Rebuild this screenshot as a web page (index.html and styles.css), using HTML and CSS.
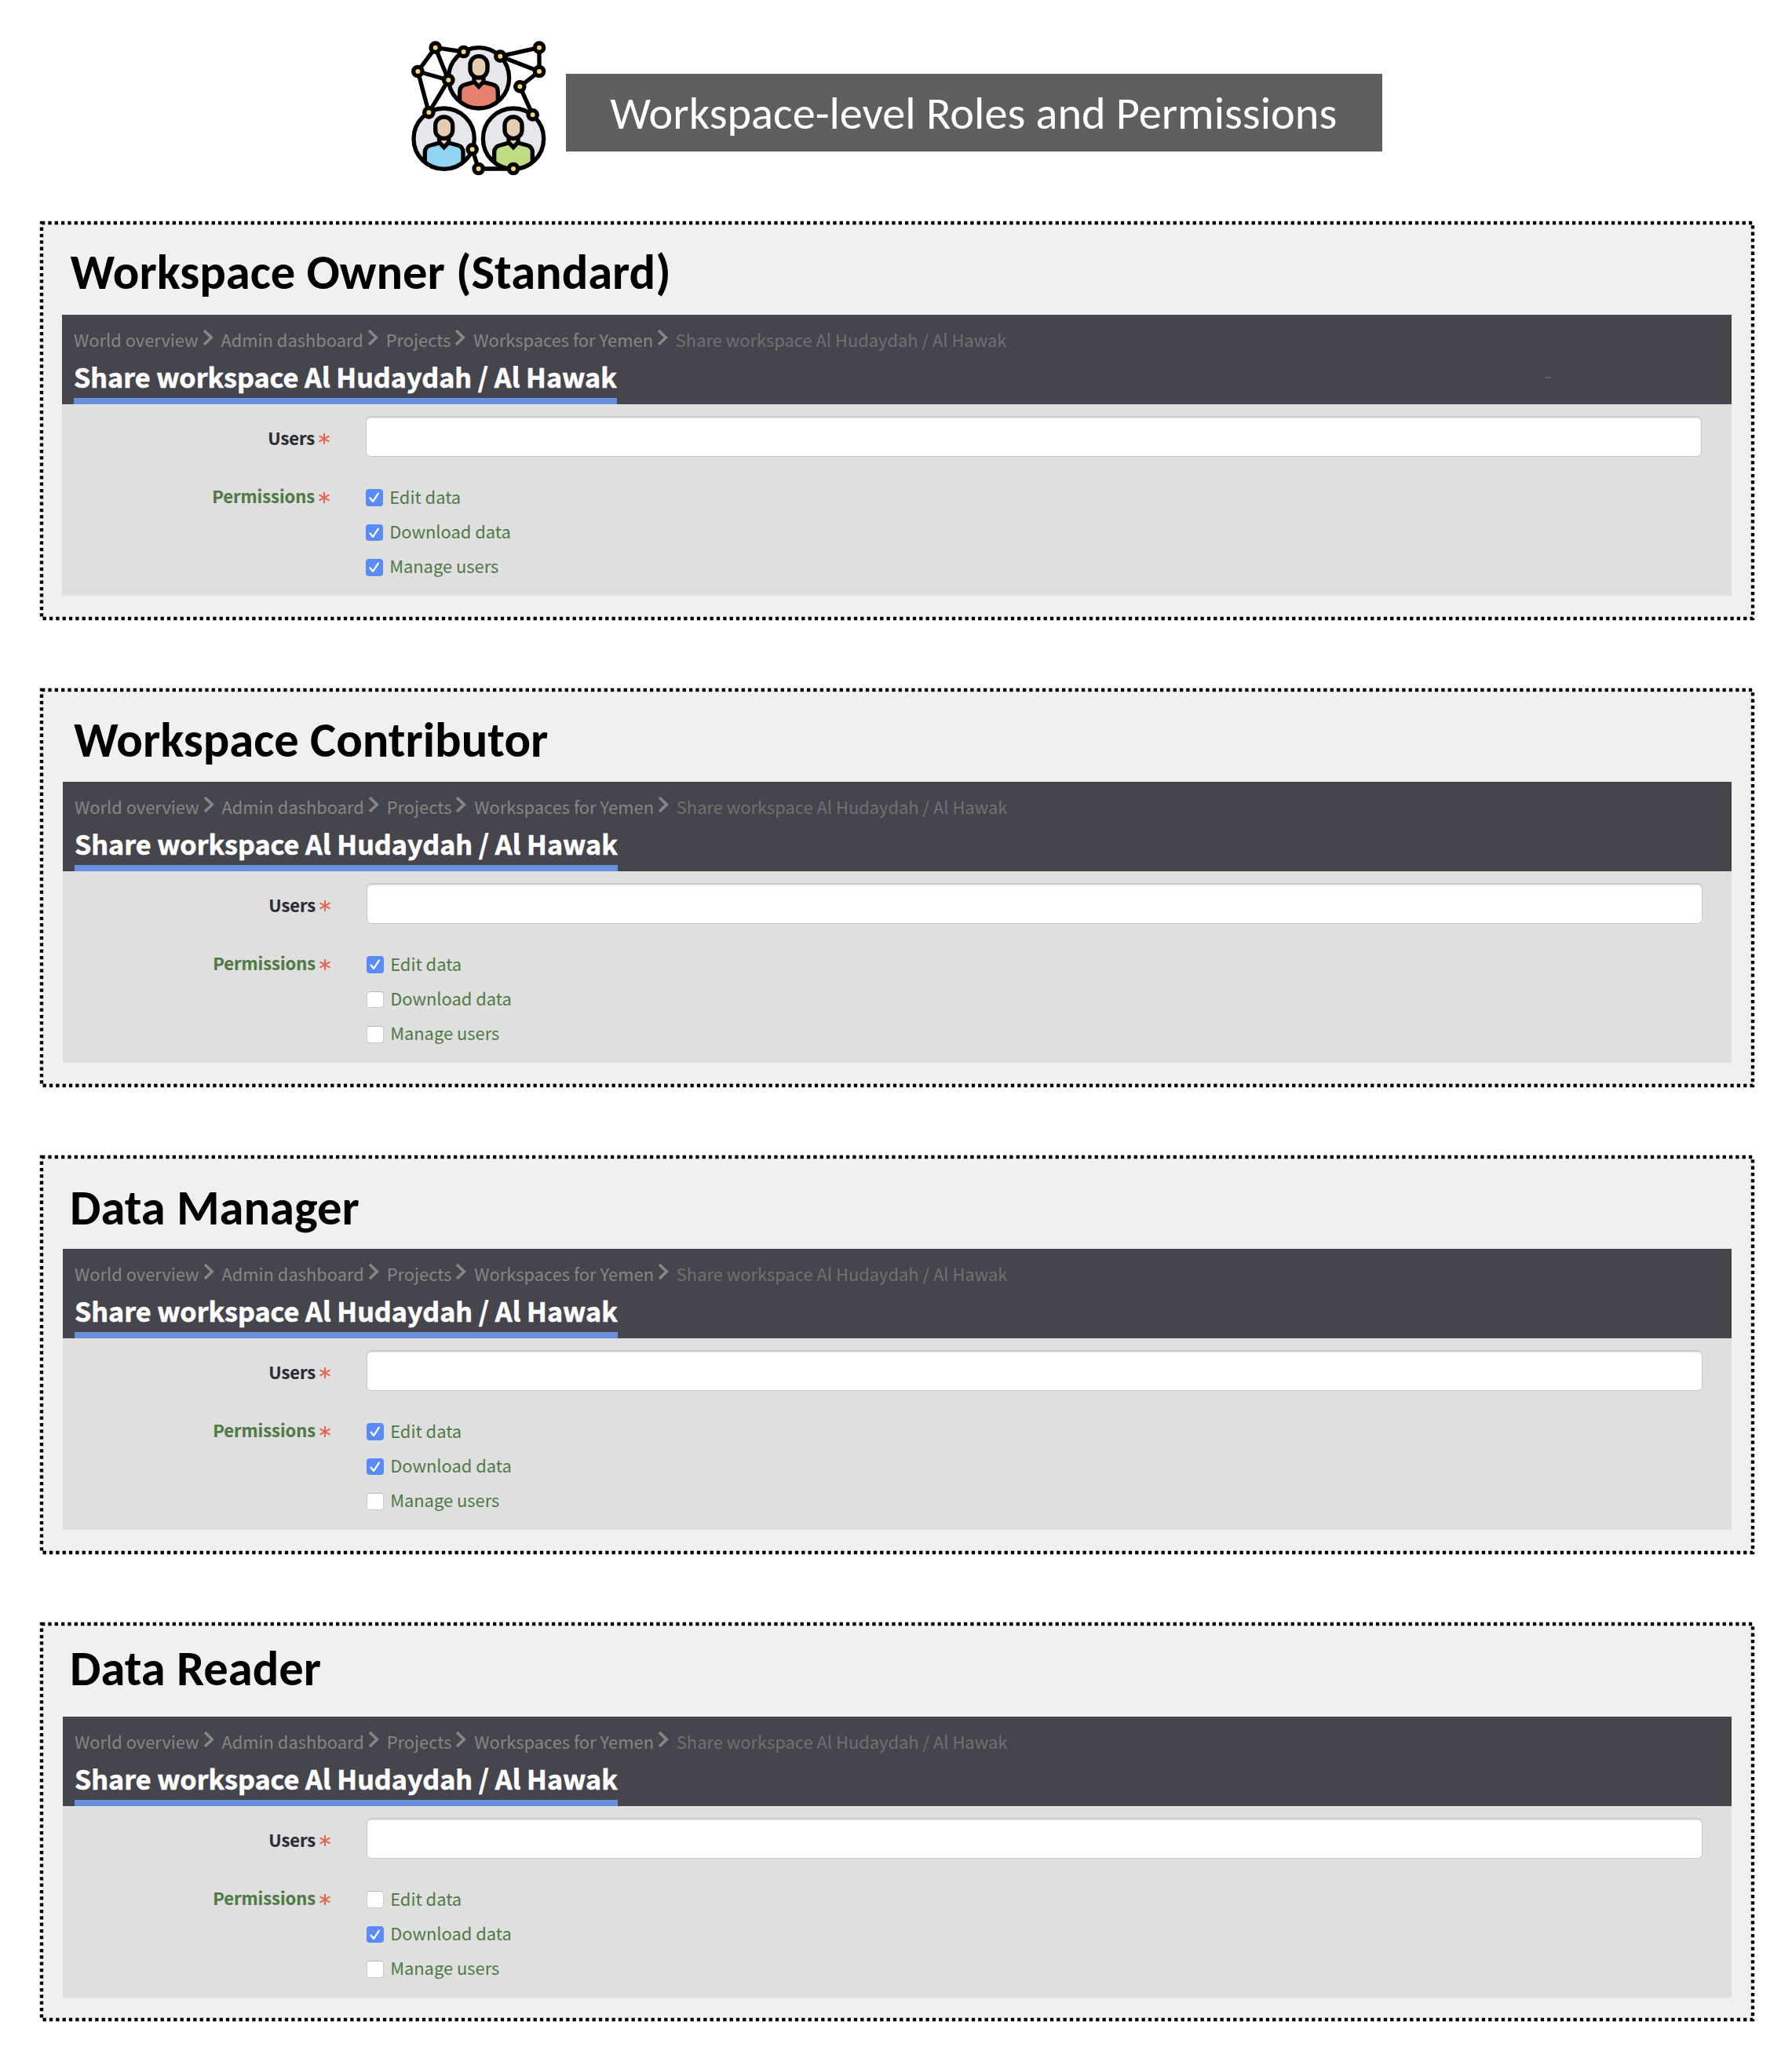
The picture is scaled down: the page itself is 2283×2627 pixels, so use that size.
FILE: index.html
```html
<!DOCTYPE html>
<html lang="en">
<head>
<meta charset="utf-8">
<title>Workspace-level Roles and Permissions</title>
<link rel="stylesheet" href="styles.css">
</head>
<body>
<svg class="defs" width="0" height="0" aria-hidden="true">
  <symbol id="chevron" viewBox="0 0 14 22"><path d="M2 2 L11.3 11 L2 20" fill="none" stroke="#868686" stroke-width="3.6"/></symbol>
  <symbol id="star" viewBox="0 0 16 16"><path d="M8 1V15M1.5 4.4L14.5 11.6M14.5 4.4L1.5 11.6" fill="none" stroke="#e2684f" stroke-width="2.1"/></symbol>
  <symbol id="tick" viewBox="0 0 22 22"><path d="M5.6 11.8L9.3 16.2L16.2 5.8" fill="none" stroke="#fff" stroke-width="2.3" stroke-linecap="round" stroke-linejoin="round"/></symbol>
  <symbol id="person" viewBox="0 0 260 260" overflow="visible">
    <circle cx="130" cy="130" r="117" fill="#e6e7ec"/>
    <path d="M57 222V182Q57 160 80 155L112 144L130 166L148 144L182 155Q203 160 203 182V222Q130 276 57 222Z" fill="currentColor"/>
    <path d="M114 128H146V146L130 162L114 146Z" fill="#e6cdb1"/>
    <path d="M57 222V182Q57 160 80 155L112 146V128M148 128V146L182 155Q203 160 203 182V222M112 144L130 163L148 144" fill="none" stroke="#000" stroke-width="16"/>
    <rect x="97" y="47" width="66" height="82" rx="32" fill="#e6cdb1" stroke="#000" stroke-width="16"/>
    <circle cx="130" cy="130" r="116" fill="none" stroke="#000" stroke-width="16"/>
  </symbol>
</svg>

<header class="top">
  <svg class="logo" viewBox="0 0 600 570">
    <use class="red" href="#person" x="170" y="48" width="260" height="260"/>
    <use class="blue" href="#person" x="37" y="280" width="260" height="260"/>
    <use class="green" href="#person" x="302" y="280" width="260" height="260"/>
    <path d="M242 78L134 62L67 153L184 186L134 62M67 153L109 310L184 186M531 153L382 95L531 62V153L457 211L506 319M275 451L299 525H432" fill="none" stroke="#000" stroke-width="16" stroke-linejoin="round"/>
    <g fill="#f6d773" stroke="#000" stroke-width="16">
      <circle cx="134" cy="62" r="17"/><circle cx="242" cy="78" r="17"/><circle cx="67" cy="153" r="17"/><circle cx="184" cy="186" r="17"/><circle cx="109" cy="310" r="17"/><circle cx="382" cy="95" r="17"/><circle cx="531" cy="62" r="17"/><circle cx="531" cy="153" r="17"/><circle cx="457" cy="211" r="17"/><circle cx="506" cy="319" r="17"/><circle cx="275" cy="451" r="17"/><circle cx="299" cy="525" r="17"/><circle cx="432" cy="525" r="17"/>
    </g>
  </svg>
  <h1 class="banner">Workspace-level Roles and Permissions</h1>
</header>

<main>
<section class="panel owner">
  <svg class="frame"><rect width="2180" height="504"/></svg>
  <h2>Workspace Owner (Standard)</h2>
  <div class="bar">
    <nav><span>World overview</span><svg><use href="#chevron"/></svg><span>Admin dashboard</span><svg><use href="#chevron"/></svg><span>Projects</span><svg><use href="#chevron"/></svg><span>Workspaces for Yemen</span><svg><use href="#chevron"/></svg><span class="here">Share workspace Al Hudaydah / Al Hawak</span></nav>
    <h3>Share workspace Al Hudaydah / Al Hawak</h3>
    <i class="mark"></i>
  </div>
  <div class="form">
    <div class="label">Users<svg><use href="#star"/></svg></div><div class="input"></div>
    <div class="label perm">Permissions<svg><use href="#star"/></svg></div>
    <div class="options">
      <div class="option"><span class="box on"><svg><use href="#tick"/></svg></span>Edit data</div>
      <div class="option"><span class="box on"><svg><use href="#tick"/></svg></span>Download data</div>
      <div class="option"><span class="box on"><svg><use href="#tick"/></svg></span>Manage users</div>
    </div>
  </div>
</section>

<section class="panel contributor">
  <svg class="frame"><rect width="2180" height="504"/></svg>
  <h2>Workspace Contributor</h2>
  <div class="bar">
    <nav><span>World overview</span><svg><use href="#chevron"/></svg><span>Admin dashboard</span><svg><use href="#chevron"/></svg><span>Projects</span><svg><use href="#chevron"/></svg><span>Workspaces for Yemen</span><svg><use href="#chevron"/></svg><span class="here">Share workspace Al Hudaydah / Al Hawak</span></nav>
    <h3>Share workspace Al Hudaydah / Al Hawak</h3>
  </div>
  <div class="form">
    <div class="label">Users<svg><use href="#star"/></svg></div><div class="input"></div>
    <div class="label perm">Permissions<svg><use href="#star"/></svg></div>
    <div class="options">
      <div class="option"><span class="box on"><svg><use href="#tick"/></svg></span>Edit data</div>
      <div class="option"><span class="box"></span>Download data</div>
      <div class="option"><span class="box"></span>Manage users</div>
    </div>
  </div>
</section>

<section class="panel manager">
  <svg class="frame"><rect width="2180" height="504"/></svg>
  <h2>Data Manager</h2>
  <div class="bar">
    <nav><span>World overview</span><svg><use href="#chevron"/></svg><span>Admin dashboard</span><svg><use href="#chevron"/></svg><span>Projects</span><svg><use href="#chevron"/></svg><span>Workspaces for Yemen</span><svg><use href="#chevron"/></svg><span class="here">Share workspace Al Hudaydah / Al Hawak</span></nav>
    <h3>Share workspace Al Hudaydah / Al Hawak</h3>
  </div>
  <div class="form">
    <div class="label">Users<svg><use href="#star"/></svg></div><div class="input"></div>
    <div class="label perm">Permissions<svg><use href="#star"/></svg></div>
    <div class="options">
      <div class="option"><span class="box on"><svg><use href="#tick"/></svg></span>Edit data</div>
      <div class="option"><span class="box on"><svg><use href="#tick"/></svg></span>Download data</div>
      <div class="option"><span class="box"></span>Manage users</div>
    </div>
  </div>
</section>

<section class="panel reader">
  <svg class="frame"><rect width="2180" height="504"/></svg>
  <h2>Data Reader</h2>
  <div class="bar">
    <nav><span>World overview</span><svg><use href="#chevron"/></svg><span>Admin dashboard</span><svg><use href="#chevron"/></svg><span>Projects</span><svg><use href="#chevron"/></svg><span>Workspaces for Yemen</span><svg><use href="#chevron"/></svg><span class="here">Share workspace Al Hudaydah / Al Hawak</span></nav>
    <h3>Share workspace Al Hudaydah / Al Hawak</h3>
  </div>
  <div class="form">
    <div class="label">Users<svg><use href="#star"/></svg></div><div class="input"></div>
    <div class="label perm">Permissions<svg><use href="#star"/></svg></div>
    <div class="options">
      <div class="option"><span class="box"></span>Edit data</div>
      <div class="option"><span class="box on"><svg><use href="#tick"/></svg></span>Download data</div>
      <div class="option"><span class="box"></span>Manage users</div>
    </div>
  </div>
</section>
</main>
</body>
</html>
```
FILE: styles.css
```css
* { box-sizing: border-box; }
body { margin: 0; min-height: 2627px; background: #fff; font-family: "Noto Sans CJK JP", "Noto Sans", sans-serif; font-size: 21.9px; }
h1, h2, h3 { margin: 0; white-space: nowrap; }
.defs { display: block; height: 0; }

.top { display: flex; align-items: flex-start; gap: 10.7px; height: 284px; padding: 40px 0 0 510px; }
.logo { width: 200px; height: 190px; flex: none; }
.red { color: #e6816f; }
.blue { color: #91d4f2; }
.green { color: #bedc82; }
.banner { margin-top: 54.3px; width: 1040.6px; height: 98.7px; padding-left: 56.5px; background: #5f5f5f; color: #fff; font: 400 58.3px/101px Carlito, Lato, sans-serif; }

main { display: flex; flex-direction: column; gap: 91px; padding-left: 52.7px; }
.panel { position: relative; width: 2180px; height: 504px; padding: 0 26.4px 0 27.3px; background: #f0f0f0; }
.owner { padding-left: 26.3px; }
.frame { position: absolute; left: 0; top: 0; width: 2180px; height: 504px; overflow: visible; fill: none; stroke: #000; stroke-width: 4.4px; stroke-dasharray: 4.3px 4.033px; }

h2 { height: 117px; padding: 25.5px 0 0 14px; font: 700 62.6px/76px Carlito, Lato, sans-serif; color: #000; }
.owner h2 { padding: 25px 0 0 10.5px; }
.manager h2 { padding: 26.5px 0 0 9px; }
.reader h2 { height: 118px; padding: 18.5px 0 0 9px; }

.bar { position: relative; height: 114px; padding: 15.5px 0 0 15px; background: #45454d; display: flex; flex-direction: column; align-items: flex-start; }
nav { display: flex; height: 32px; line-height: 32px; color: #868686; white-space: nowrap; }
nav svg { width: 14px; height: 22px; margin: 2.2px 9.8px 0 5px; flex: none; }
.here { color: #707073; }
h3 { margin-top: 10.5px; height: 56px; border-bottom: 8px solid #6b8fdf; font-size: 34.1px; line-height: 40px; font-weight: 700; color: #fff; -webkit-text-stroke: .6px #fff; }
.mark { position: absolute; left: 1888px; top: 79px; width: 10px; height: 2px; border-radius: 50%; background: #66666b; }

.form { display: grid; grid-template-columns: 342.2px 1701.4px; column-gap: 45px; row-gap: 28.4px; height: 244px; padding-top: 15.3px; align-content: start; background: #dfdfdf; }
.label { display: flex; justify-content: flex-end; height: 44px; padding-top: 2px; line-height: 51.3px; font-weight: 700; color: #2b2b33; -webkit-text-stroke: .2px currentColor; }
.label svg { width: 16px; height: 16px; margin: 18.6px 0 0 4px; flex: none; }
.label.perm { padding-top: 0; line-height: 44.3px; color: #507a45; }
.label.perm svg { margin-top: 16px; }
.input { height: 51.3px; border: 1.6px solid #cacaca; border-top-width: 2px; border-radius: 6px; background: #fff; box-shadow: inset 0 1px 2px #e4e4e4; }
.option { display: flex; align-items: center; height: 44.3px; color: #507a45; }
.box { width: 21.6px; height: 21.6px; margin: 4px 8.4px 0 0; border: 1px solid #cbcbcb; border-top-color: #b9b9b9; border-radius: 4px; background: #fff; flex: none; }
.box.on { border: 0; background: #5b8af9; }
.box svg { display: block; width: 21.6px; height: 21.6px; }
```
